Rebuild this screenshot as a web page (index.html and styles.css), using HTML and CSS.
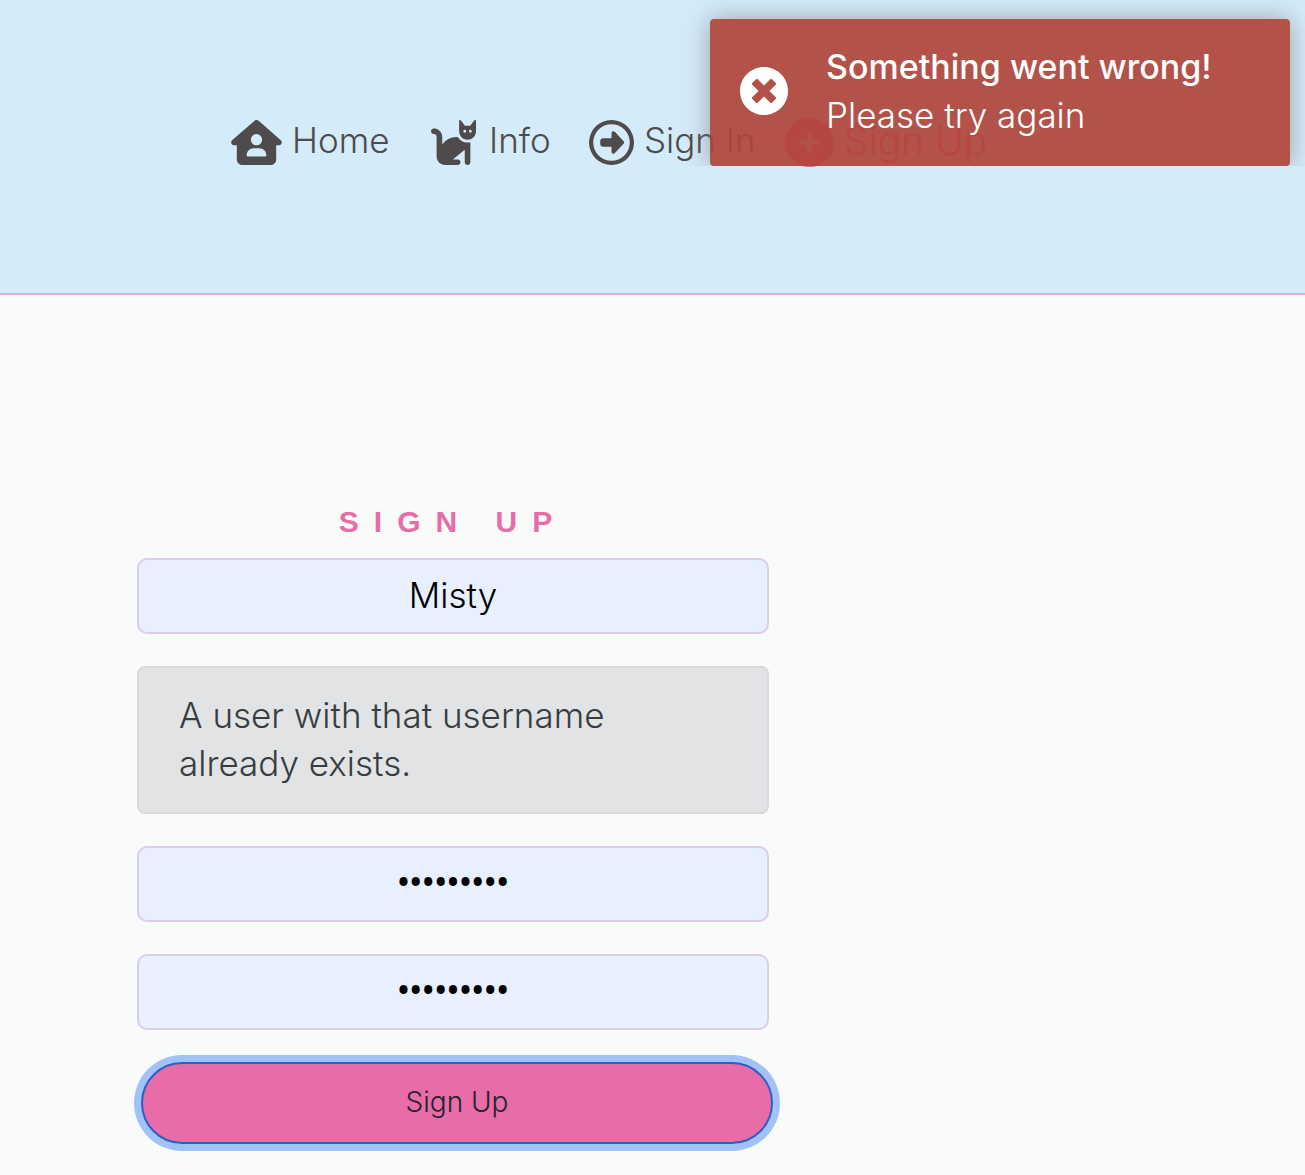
FILE: index.html
```html
<!DOCTYPE html>
<html lang="en">
<head>
<meta charset="utf-8">
<meta name="viewport" content="width=device-width, initial-scale=1">
<title>Sign Up</title>
<link rel="stylesheet" href="styles.css">
</head>
<body>
<header class="header">
  <nav class="nav">
    <a class="nav-link" href="#home">
      <svg class="icon icon-wide" viewBox="0 0 576 512" aria-hidden="true"><path fill-rule="evenodd" d="M575.8 255.5c0 18-15 32.1-32 32.1h-32l.7 160.2c.2 35.5-28.5 64.3-64 64.3H128.1c-35.3 0-64-28.7-64-64V287.6H32c-18 0-32-14-32-32.1c0-9 3-17 10-24L266.4 8c7-7 15-8 22-8s15 2 21 7L564.8 231.5c8 7 12 15 11 24zM352 224a64 64 0 1 0 -128 0 64 64 0 1 0 128 0zm-96 96c-44.2 0-80 35.8-80 80c0 8.8 7.2 16 16 16H384c8.8 0 16-7.2 16-16c0-44.2-35.8-80-80-80H256z"/></svg>
      <span>Home</span>
    </a>
    <a class="nav-link" href="#info">
      <svg class="icon icon-wide" viewBox="0 0 576 512" aria-hidden="true"><path fill-rule="evenodd" d="M320 192h17.1c22.1 38.3 63.5 64 110.9 64c11 0 21.8-1.4 32-4v4 32V480c0 17.7-14.3 32-32 32s-32-14.3-32-32V339.2L280 448h56c17.7 0 32 14.3 32 32s-14.3 32-32 32H192c-53 0-96-43-96-96V192.5c0-16.1-12-29.8-28-31.8l-7.9-1c-17.5-2.2-30-18.2-27.8-35.7s18.2-30 35.7-27.8l7.9 1c48 6 84.1 46.8 84.1 95.3v85.3c34.4-51.7 93.2-85.8 160-85.8zm160 26.5c-10 3.5-20.8 5.5-32 5.5c-28.4 0-54-12.4-71.6-32c-3.7-4.1-7-8.5-9.9-13.2C357.3 164 352 146.6 352 128V32 12 10.7C352 4.8 356.7 .1 362.6 0h.2c3.3 0 6.4 1.6 8.4 4.2l0 .1L384 21.3l27.2 36.3L416 64h64l4.8-6.4L512 21.3 524.8 4.3l0-.1c2-2.6 5.1-4.2 8.4-4.2h.2C539.3 .1 544 4.8 544 10.7V12 32v96c0 17.3-4.6 33.6-12.6 47.6c-11.3 19.8-29.6 35.2-51.4 42.9zM432 128a16 16 0 1 0 -32 0 16 16 0 1 0 32 0zm48 16a16 16 0 1 0 0-32 16 16 0 1 0 0 32z"/></svg>
      <span>Info</span>
    </a>
    <a class="nav-link" href="#signin">
      <svg class="icon" viewBox="0 0 512 512" aria-hidden="true"><path fill-rule="evenodd" d="M464 256A208 208 0 1 1 48 256a208 208 0 1 1 416 0zM0 256a256 256 0 1 0 512 0A256 256 0 1 0 0 256z"/><path d="M294.6 135.2c-4.2-4.6-10.1-7.2-16.4-7.2C266 128 256 138 256 150.3V208H160c-17.7 0-32 14.3-32 32v32c0 17.7 14.3 32 32 32h96v57.7c0 12.3 10 22.3 22.3 22.3c6.2 0 12.1-2.6 16.4-7.2l99-107c3.5-3.8 5.4-8.7 5.4-13.9s-1.9-10.1-5.4-13.9l-99-107z"/></svg>
      <span>Sign In</span>
    </a>
    <a class="nav-link nav-link-active" href="#signup">
      <svg class="icon icon-large" viewBox="0 0 512 512" aria-hidden="true"><circle cx="256" cy="256" r="256"/><path class="plus" d="M256 168V344M168 256H344"/></svg>
      <span>Sign Up</span>
    </a>
  </nav>
</header>

<aside class="toast" role="alert">
  <svg class="toast-icon" viewBox="8 8 496 496" aria-hidden="true"><path d="M256 8C119 8 8 119 8 256s111 248 248 248 248-111 248-248S393 8 256 8zm121.6 313.1c4.7 4.7 4.7 12.3 0 17L338 377.6c-4.7 4.7-12.3 4.7-17 0L256 312l-65.1 65.6c-4.7 4.7-12.3 4.7-17 0L134.4 338c-4.7-4.7-4.7-12.3 0-17l65.6-65-65.6-65.1c-4.7-4.7-4.7-12.3 0-17l39.6-39.6c4.7-4.7 12.3-4.7 17 0l65 65.7 65.1-65.6c4.7-4.7 12.3-4.7 17 0l39.6 39.6c4.7 4.7 4.7 12.3 0 17L312 256l65.6 65.1z"/></svg>
  <div>
    <p class="toast-title">Something went wrong!</p>
    <p class="toast-text">Please try again</p>
  </div>
</aside>

<main class="main">
  <form class="form">
    <h1 class="title">SIGN UP</h1>
    <input class="field" type="text" aria-label="Username" value="Misty">
    <div class="alert" role="alert">A user with that username already exists.</div>
    <input class="field field-password" type="password" aria-label="Password" value="catlover1">
    <input class="field field-password" type="password" aria-label="Confirm password" value="catlover1">
    <button class="submit" type="button">Sign Up</button>
  </form>
</main>
</body>
</html>
```
FILE: styles.css
```css
* {
  box-sizing: border-box;
}

body {
  margin: 0;
  background: #f9fbfa;
  color: #4f4a4b;
  font-family: Inter, "Open Sans", sans-serif;
  font-size: 35px;
  font-weight: 300;
  line-height: 48px;
}

p,
h1 {
  margin: 0;
}

.header {
  padding: 118px 16px 126px 231px;
  background: #d4ebf9;
  border-bottom: 2px solid #dcb0dc;
}

.nav {
  display: grid;
  grid-template-columns: 197px 161px 196px auto;
  justify-content: start;
  align-items: center;
}

.nav-link {
  display: flex;
  align-items: center;
  gap: 10px;
  color: inherit;
  text-decoration: none;
  white-space: nowrap;
}

.nav-link span {
  padding-bottom: 4px;
  line-height: 45px;
}

.icon {
  flex: none;
  width: 45px;
  height: 45px;
  fill: currentColor;
}

.icon-wide {
  width: 51px;
}

.icon-large {
  width: 49px;
  height: 49px;
}

.plus {
  fill: none;
  stroke: #d4ebf9;
  stroke-width: 48;
  stroke-linecap: round;
}

.nav-link-active {
  color: #e860a6;
  font-size: 39px;
}

.toast {
  position: absolute;
  top: 19px;
  right: 15px;
  display: flex;
  align-items: center;
  gap: 38px;
  width: 580px;
  padding: 24px 30px 27px;
  border-radius: 4px;
  background: rgba(176, 68, 58, 0.92);
  box-shadow: 0 0 24px rgba(130, 130, 130, 0.7);
  clip-path: inset(-48px -48px 0 -48px);
  color: #fff;
}

.toast-icon {
  flex: none;
  width: 48px;
  height: 48px;
  fill: #fff;
}

.toast-title {
  font-size: 34px;
  font-weight: 500;
}

.main {
  padding: 203px 137px 32px;
}

.form {
  display: flex;
  flex-direction: column;
  max-width: 632px;
}

.title {
  margin-bottom: 12px;
  color: #e86ca8;
  font-family: "Liberation Sans", sans-serif;
  font-size: 30px;
  font-weight: 700;
  letter-spacing: 15px;
  text-align: center;
}

.field {
  width: 100%;
  height: 76px;
  margin-bottom: 32px;
  padding: 12px 24px 14px;
  border: 2px solid #dccde9;
  border-radius: 10px;
  background: #e8effd;
  color: #000;
  font: inherit;
  text-align: center;
}

.field-password {
  padding-bottom: 20px;
  font-family: "Open Sans", sans-serif;
  font-size: 33px;
  font-weight: 600;
}

.alert {
  margin-bottom: 32px;
  padding: 23px 40px 25px;
  border: 2px solid #d6d8db;
  border-radius: 8px;
  background: #e2e3e5;
  color: #383d41;
}

.submit {
  width: 100%;
  height: 82px;
  margin-left: 4px;
  padding-bottom: 4px;
  border: 2px solid #2860c8;
  border-radius: 41px;
  background: #e86ca8;
  box-shadow: 0 0 0 7px #a0c2f9;
  color: #212529;
  font: inherit;
  font-size: 28px;
}
```
